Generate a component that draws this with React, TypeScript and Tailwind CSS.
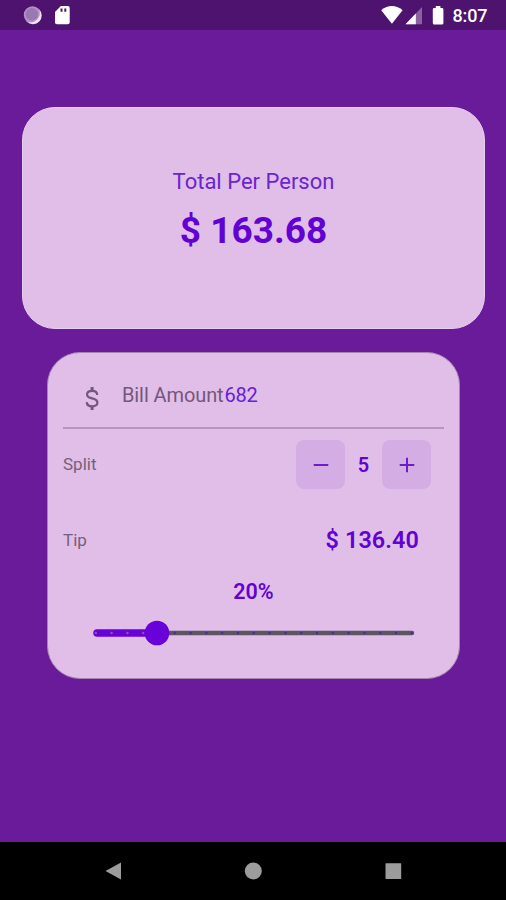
import React from "react";

const total = "163.68";
const bill = "682";
const split = 5;
const tip = "136.40";
const tipPercent = 20;

// one mark for every 5%
const marks = Array.from({ length: 21 }, (_, i) => i * 5);

function StatusBar() {
  return (
    <header className="h-[30px] bg-[#4d136f] text-white">
      <svg width="506" height="30" viewBox="0 0 506 30" fill="#fff">
        <circle cx="32.5" cy="15" r="8.7" fill="#b68fc6" />
        <path d="M39 9.2A8.7 8.7 0 0 1 27 21.8A9.5 9.5 0 0 0 39 9.2Z" fill="#efe3f4" />
        <circle cx="31.8" cy="14.3" r="6.2" fill="#9a78b2" />
        <path d="M60.8 6H67.8Q69.7 6 69.7 8V22.3Q69.7 24.3 67.8 24.3H56.9Q55 24.3 55 22.3V12Z" />
        <path d="M60.5 8.5h2v3.3h-2zM64.3 8.5h2v3.3h-2z" fill="#4d136f" />
        <path d="M381.2 10.2Q391.8 1.8 402.6 10.2L391.9 23.8Z" />
        <path d="M422 7V24.2H405.5Z" fill="#8b62a0" />
        <path d="M415.8 13.5V24.2H405.5Z" />
        <path d="M435.8 6h4.6v2h1.6q1.4 0 1.4 1.4V23q0 1.5-1.4 1.5h-7.8q-1.4 0-1.4-1.5V9.4q0-1.4 1.4-1.4h1.6z" />
        <text x="452.5" y="22.2" fontSize="18" fontWeight="500" textLength="35" fontFamily="Roboto, sans-serif">
          8:07
        </text>
      </svg>
    </header>
  );
}

function TotalCard() {
  return (
    <section className="mr-[21px] ml-[22px] mt-[77px] flex h-[222px] flex-col items-center rounded-[33px] border border-[#e8cdef] bg-[#e1bee7] pt-[60px] text-[#6202d2]">
      <h2 className="text-[22px] leading-7 text-[#6a24d0]">Total Per Person</h2>
      <p className="mt-2 text-[37px] leading-[54px] font-bold">$ {total}</p>
    </section>
  );
}

function SplitButton({ plus = false }: { plus?: boolean }) {
  return (
    <button className="flex size-[49px] items-center justify-center rounded-[8px] bg-[#d4ade4]">
      <svg width="16" height="16" viewBox="0 0 16 16" stroke="#6a1fcb" strokeWidth="2">
        <path d={plus ? "M.7 8h14.6M8 .7v14.6" : "M.7 8h14.6"} />
      </svg>
    </button>
  );
}

function TipSlider() {
  return (
    <div className="mx-auto mt-[14px] h-[26px] w-[322px]">
      <svg width="322" height="26" viewBox="0 0 322 26">
        <path d="M3 13H319" stroke="#5e5562" strokeWidth="4.5" strokeLinecap="round" />
        <path d="M4 13H64" stroke="#6802d8" strokeWidth="7.5" strokeLinecap="round" />
        {marks.map((m) => (
          <circle key={m} cx={2.8 + m * 3.16} cy="13" r="1.2" fill={m < tipPercent ? "#8955ad" : "#5222b4"} />
        ))}
        <circle cx="64" cy="13" r="12.3" fill="#6802d8" />
      </svg>
    </div>
  );
}

function BillForm() {
  return (
    <section className="mr-[46px] ml-[47px] mt-[23px] h-[327px] rounded-[33px] border border-[#a585af] bg-[#e1bee7] px-[15px] text-[#6202d2]">
      <div className="flex h-[76px] items-center border-b-2 border-[#b994c0] pt-[9px]">
        <svg
          className="mt-[6px] ml-[20px]"
          width="18"
          height="26"
          viewBox="0 0 18 26"
          fill="none"
          stroke="#74577c"
          strokeWidth="2.2"
        >
          <path d="M14.2 10C14.2 7.3 12.2 5.8 9.1 5.8C6.2 5.8 4 7.2 4 9.4C4 11.7 6 12.6 9.2 13.4C12.4 14.2 14.4 15.2 14.4 17.6C14.4 19.9 12.2 21.3 9.2 21.3C6 21.3 3.8 19.8 3.7 17.1" />
          <path d="M9.1 2V5.8M9.1 21.3V25" strokeWidth="3" />
        </svg>
        <label className="ml-[21px] text-[20px] tracking-[-0.1px] text-[#74577c]">Bill Amount</label>
        <span className="ml-px text-[20px] tracking-[-0.2px] text-[#6420dc]">{bill}</span>
      </div>
      <div className="mt-[11px] flex h-[49px] items-center pr-[13px]">
        <span className="mt-px mr-auto text-[17px] text-[#75607c]">Split</span>
        <SplitButton />
        <span className="w-[37px] text-center text-[20px] font-semibold">{split}</span>
        <SplitButton plus />
      </div>
      <div className="mt-[36px] flex h-8 items-center justify-between pr-[25px]">
        <span className="text-[17px] text-[#75607c]">Tip</span>
        <span className="text-[23.4px] tracking-[0.1px] font-semibold">$ {tip}</span>
      </div>
      <p className="mt-[21px] text-center text-[21.5px] leading-7 font-semibold">{tipPercent}%</p>
      <TipSlider />
    </section>
  );
}

function NavBar() {
  return (
    <footer className="mt-auto h-[58px] bg-black">
      <svg width="506" height="58" viewBox="0 0 506 58" fill="#9c9c9c">
        <path d="M105.5 29L121 20.5V37.5Z" />
        <circle cx="253.3" cy="29" r="8.5" />
        <rect x="385.5" y="21.3" width="15.7" height="15.7" rx=".5" />
      </svg>
    </footer>
  );
}

export default function App() {
  return (
    <main className="flex h-[900px] w-[506px] flex-col overflow-hidden bg-[#6a1b9a] font-[Roboto,sans-serif]">
      <StatusBar />
      <TotalCard />
      <BillForm />
      <NavBar />
    </main>
  );
}
